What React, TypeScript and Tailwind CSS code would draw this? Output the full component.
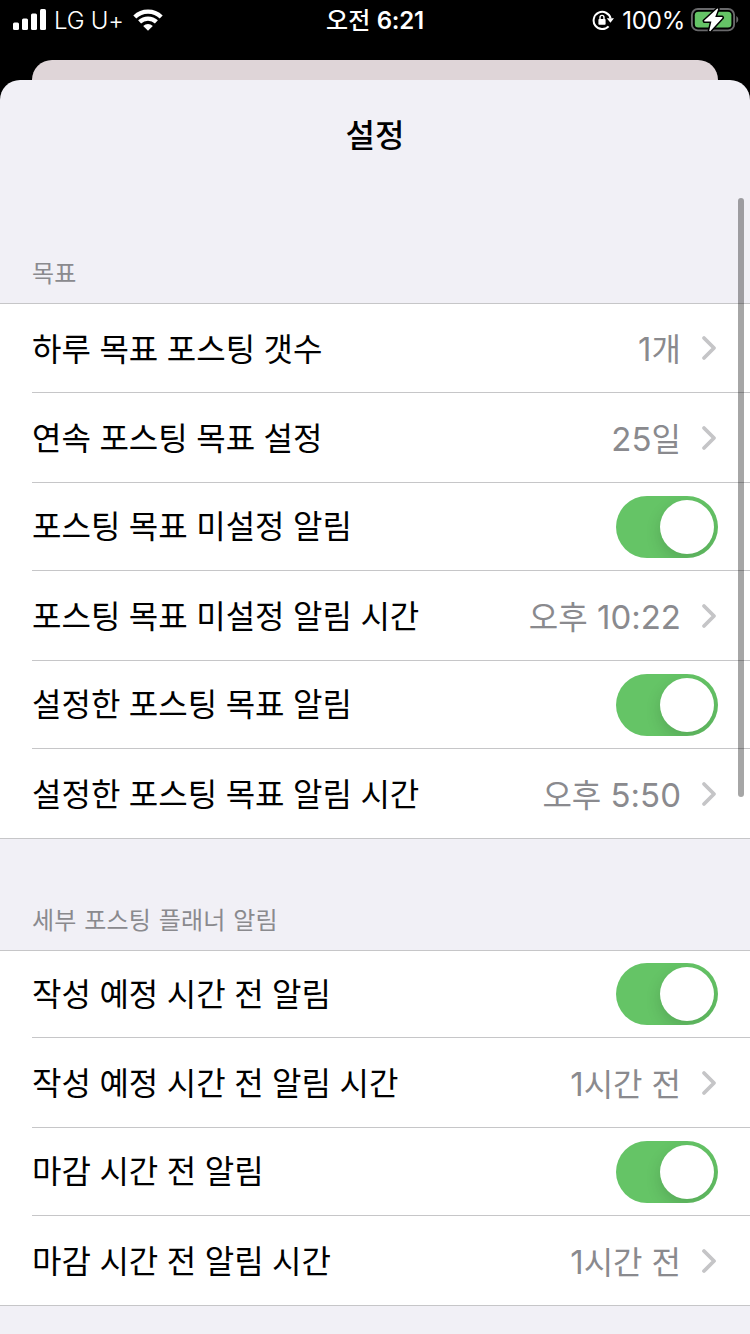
import React from "react";

type RowData = {
  label: string;
  height: string;
  value?: React.ReactNode;
};

const goalRows: RowData[] = [
  { label: "하루 목표 포스팅 갯수", height: "h-[89px]", value: <>1<Hangul>개</Hangul></> },
  { label: "연속 포스팅 목표 설정", height: "h-[90px]", value: <>25<Hangul>일</Hangul></> },
  { label: "포스팅 목표 미설정 알림", height: "h-[88px]" },
  { label: "포스팅 목표 미설정 알림 시간", height: "h-[90px]", value: <><Hangul>오후</Hangul> 10:22</> },
  { label: "설정한 포스팅 목표 알림", height: "h-[88px]" },
  { label: "설정한 포스팅 목표 알림 시간", height: "h-[90px]", value: <><Hangul>오후</Hangul> 5:50</> },
];

const plannerRows: RowData[] = [
  { label: "작성 예정 시간 전 알림", height: "h-[87px]" },
  { label: "작성 예정 시간 전 알림 시간", height: "h-[90px]", value: <>1<Hangul>시간 전</Hangul></> },
  { label: "마감 시간 전 알림", height: "h-[88px]" },
  { label: "마감 시간 전 알림 시간", height: "h-[90px]", value: <>1<Hangul>시간 전</Hangul></> },
];

function Hangul({ children }: { children: React.ReactNode }) {
  return <span className="text-[32px]">{children}</span>;
}

function Toggle() {
  return (
    <button
      type="button"
      role="switch"
      aria-checked="true"
      className="flex h-[62px] w-[102px] items-center justify-end overflow-hidden rounded-full bg-[#65c466] pr-1"
    >
      <span className="size-[54px] rounded-full bg-white shadow-[0_6px_16px_rgba(0,0,0,0.14)]" />
    </button>
  );
}

function Chevron() {
  return (
    <svg className="ml-[19px] h-7 w-[18px]" viewBox="0 0 18 28" fill="none" stroke="#c5c5c7" strokeWidth="3.8" strokeLinecap="round" strokeLinejoin="round">
      <path d="M4 4 L14 14 L4 24" />
    </svg>
  );
}

function Row({ row, last }: { row: RowData; last: boolean }) {
  const shortRow = !row.value;
  return (
    <div className={`${row.height} flex ${last ? "border-b border-[#c6c6c8] pl-8" : "pl-8"}`}>
      <div className={`flex flex-1 items-center justify-between pr-8 ${last ? "" : "border-b border-[#c6c6c8]"}`}>
        <span
          className={`text-[32px] leading-none [word-spacing:-0.5px] whitespace-nowrap text-black ${shortRow ? "pt-px" : "pt-[3px]"}`}
        >
          {row.label}
        </span>
        {row.value ? (
          <div className="flex items-center text-[33px] leading-none whitespace-nowrap text-[#8a8a8e]">
            <span className="pt-[3px]">{row.value}</span>
            <Chevron />
          </div>
        ) : (
          <Toggle />
        )}
      </div>
    </div>
  );
}

function Group({ rows }: { rows: RowData[] }) {
  return (
    <div className="border-t border-[#c6c6c8] bg-white">
      {rows.map((row, i) => (
        <Row key={row.label} row={row} last={i === rows.length - 1} />
      ))}
    </div>
  );
}

function SectionTitle({ children }: { children: React.ReactNode }) {
  return (
    <h2 className="flex h-[111px] items-end px-8 pb-[17px] text-[24px] leading-none tracking-[0.1px] [word-spacing:1.1px] text-[#8a8a8e]">
      {children}
    </h2>
  );
}

function StatusBar() {
  return (
    <div className="grid h-10 grid-cols-[1fr_auto_1fr] items-center bg-black px-3 text-[24px] leading-none text-white">
      <div className="flex items-center">
        <svg className="h-[22px] w-[34px]" viewBox="0 0 34 22" fill="#fff">
          <rect x="1" y="13.5" width="6" height="7.5" rx="1.5" />
          <rect x="10" y="9.5" width="6" height="11.5" rx="1.5" />
          <rect x="19" y="4.5" width="6" height="16.5" rx="1.5" />
          <rect x="28" y="0" width="6" height="21" rx="1.5" />
        </svg>
        <span className="ml-2 pt-0.5 font-light tracking-[-0.2px]">LG U+</span>
        <svg className="ml-[9px] h-[22px] w-[30px]" viewBox="0 0 30 22">
          <g fill="none" stroke="#fff" strokeWidth="4.3">
            <path d="M1.8 8 A19 19 0 0 1 28.2 8" />
            <path d="M6.6 12.9 A12.2 12.2 0 0 1 23.4 12.9" />
          </g>
          <path d="M10.2 17 A7 7 0 0 1 19.8 17 L15 21.8 Z" fill="#fff" />
        </svg>
      </div>
      <span className="pt-0.5 font-medium">오전 <span className="font-semibold tracking-[-0.2px]">6:21</span></span>
      <div className="-mr-[2px] flex items-center justify-end">
        <svg className="h-[22px] w-[22px]" viewBox="0 0 22 22" fill="none" stroke="#fff" strokeWidth="2">
          <path d="M16.6 17.3 A8.6 8.6 0 1 1 18.6 9.5" />
          <path d="M14.8 9.2 H22 L18.4 13.8 Z" fill="#fff" stroke="none" />
          <rect x="6.4" y="10" width="7.2" height="5.8" rx="0.8" fill="#fff" stroke="none" />
          <path d="M8 10.5 V8.4 a2 2 0 0 1 4 0 V10.5" strokeWidth="1.4" />
        </svg>
        <span className="ml-2 pt-0.5 text-[24px] tracking-[-0.2px]">100%</span>
        <svg className="ml-[5px] h-6 w-[50px]" viewBox="0 0 50 24">
          <rect x="1.9" y="1" width="42.2" height="21.4" rx="6" fill="none" stroke="#69696b" strokeWidth="1.9" />
          <rect x="4.8" y="3.8" width="36.6" height="15.8" rx="3.5" fill="#65c466" />
          <path d="M46.3 8 c2.6 1.5 2.6 5.5 0 7 Z" fill="#69696b" />
          <path d="M27.3 0.6 L14 12.8 L14.5 13.6 H21.4 L19.2 22.8 L20.2 23.2 L32.6 9.8 L32.2 9 H25.2 L28.2 1 Z" fill="#fff" stroke="#000" strokeWidth="3" paintOrder="stroke" strokeLinejoin="round" />
        </svg>
      </div>
    </div>
  );
}

export default function App() {
  return (
    <div
      lang="ko"
      className="relative flex h-[1334px] w-[750px] flex-col overflow-hidden bg-black font-['Inter','Noto_Sans_CJK_KR',sans-serif]"
    >
      <StatusBar />
      <div className="mx-8 mt-5 h-5 shrink-0 rounded-t-[20px] bg-[#dfd5d8]" />
      <main className="flex-1 rounded-t-[20px] bg-[#f1f0f6]">
        <h1 className="flex h-[112px] items-center justify-center text-[32px] leading-none font-medium">설정</h1>
        <SectionTitle>목표</SectionTitle>
        <Group rows={goalRows} />
        <SectionTitle>세부 포스팅 플래너 알림</SectionTitle>
        <Group rows={plannerRows} />
      </main>
      <div className="absolute top-[198px] right-1.5 h-[599px] w-1.5 rounded-full bg-black/35" />
    </div>
  );
}
